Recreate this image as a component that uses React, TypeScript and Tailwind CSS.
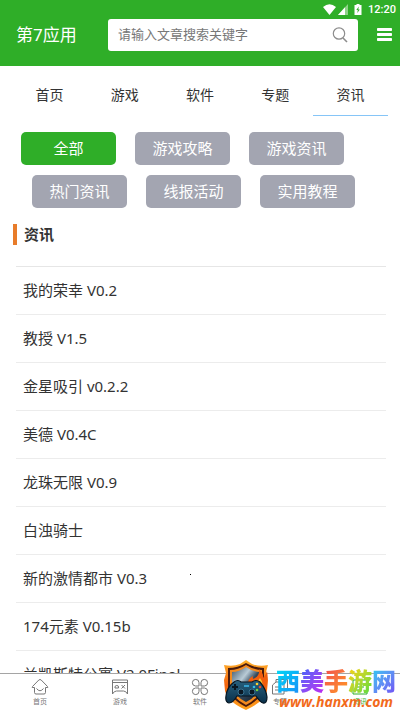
import { useState } from "react";

const tabs = ["首页", "游戏", "软件", "专题", "资讯"];

const categoryRows = [
  ["全部", "游戏攻略", "游戏资讯"],
  ["热门资讯", "线报活动", "实用教程"],
];

const articles = [
  "我的荣幸 V0.2",
  "教授 V1.5",
  "金星吸引 v0.2.2",
  "美德 V0.4C",
  "龙珠无限 V0.9",
  "白浊骑士",
  "新的激情都市 V0.3",
  "174元素 V0.15b",
  "兰凯斯特公寓 V2.0Final",
];

function StatusBar() {
  return (
    <div className="flex h-[19px] items-center justify-end pr-1 text-white">
      <svg className="h-[11px] w-[13px]" viewBox="0 0 13 11" fill="currentColor">
        <path d="M0 3Q6.500-2.500 13 3L6.500 11Z" />
      </svg>
      <svg className="ml-0.5 h-[11px] w-[10px]" viewBox="0 0 10 11">
        <path d="M0 11L10 0V11Z" fill="#8fd389" />
        <path d="M0 11L7 3.300V11Z" fill="#fff" />
      </svg>
      <svg className="ml-1.5 h-[11px] w-[8px]" viewBox="0 0 8 11">
        <path d="M2.500 0h3v1H7.500v10H.5V1h2z" fill="#fff" />
        <path d="M4.800 2.500L2.300 6h1.500L3.300 9l2.500-3.600H4.300z" fill="#2fae28" />
      </svg>
      <span className="ml-1.5 font-['Roboto'] text-[11px] font-medium leading-4">
        12:20
      </span>
    </div>
  );
}

function Header() {
  return (
    <header className="h-[66px] shrink-0 bg-[#2fae28]">
      <StatusBar />
      <div className="flex h-8 items-center pl-4 pr-2">
        <h1 className="w-[92px] shrink-0 text-[17px] leading-6 text-white">
          第7应用
        </h1>
        <form
          className="flex h-8 min-w-0 flex-1 items-center rounded-[3px] bg-white px-2.5"
          onSubmit={(e) => e.preventDefault()}
        >
          <input
            aria-label="搜索"
            className="min-w-0 flex-1 bg-transparent text-[13px] text-gray-700 outline-none placeholder:text-[#777]"
            placeholder="请输入文章搜索关键字"
            type="search"
          />
          <button aria-label="搜索" type="submit">
            <svg
              className="h-4 w-4"
              viewBox="0 0 16 16"
              fill="none"
              stroke="#8c8c8c"
              strokeWidth="1.200"
            >
              <circle cx="7" cy="6.500" r="5.700" />
              <path d="M11 11L15 15" strokeWidth="1.600" />
            </svg>
          </button>
        </form>
        <button aria-label="菜单" className="ml-[19px]" type="button">
          <svg className="h-[14px] w-[15px]" viewBox="0 0 15 14" fill="#fff">
            <rect width="15" height="3" rx=".7" />
            <rect y="5" width="15" height="3" rx=".7" />
            <rect y="10" width="15" height="3" rx=".7" />
          </svg>
        </button>
      </div>
    </header>
  );
}

function HomeIcon() {
  return (
    <path d="M3.500 9.500H1.200Q1 9 1.500 8.500L7.800 2Q9 1 10.200 2L16.500 8.500Q17 9 16.800 9.500H14.500V14.500Q14.500 16 13 16H5Q3.500 16 3.500 14.500ZM5.500 10.500Q9 15 12.500 10.500" />
  );
}

function GameIcon() {
  return (
    <>
      <path d="M1.500 2H16.500V16Q15 13 12.500 13H5.500Q3 13 1.500 16ZM1.500 4.500H16.500" />
      <path d="M4 10V9Q4 7.500 5.800 7.500T7.500 9V10Z" />
      <path d="M10.500 7L14 10.500M14 7L10.500 10.500" />
    </>
  );
}

function AppIcon() {
  return (
    <>
      <path d="M8 8H4.500A3.300 3.300 0 1 1 8 4.700Z" />
      <path d="M10 8V4.700A3.300 3.300 0 1 1 13.500 8Z" />
      <path d="M8 10V13.300A3.300 3.300 0 1 1 4.500 10Z" />
      <path d="M10 10H13.500A3.300 3.300 0 1 1 10 13.300Z" />
    </>
  );
}

function TopicIcon() {
  return (
    <>
      <path d="M5 4V1.500H16.500V13H13" />
      <path d="M1.500 7L5 4H13V16H1.500ZM4 9H10M4 12H10" />
    </>
  );
}

function NewsIcon() {
  return <path d="M2 2H16V16H2ZM5 6H13M5 9H13M5 12H10" />;
}

const bottomItems = [
  { label: "首页", Icon: HomeIcon },
  { label: "游戏", Icon: GameIcon },
  { label: "软件", Icon: AppIcon },
  { label: "专题", Icon: TopicIcon },
  { label: "资讯", Icon: NewsIcon },
];

function BottomBar() {
  return (
    <nav className="grid h-[38px] shrink-0 grid-cols-5 border-t border-[#a5a5a5] bg-white">
      {bottomItems.map(({ label, Icon }, i) => (
        <a
          className={`flex flex-col items-center pt-1 ${i === 4 ? "text-[#2fae28]" : "text-[#777]"}`}
          href="#"
          key={label}
        >
          <svg
            className="h-[18px] w-[18px]"
            viewBox="0 0 18 18"
            fill="none"
            stroke="currentColor"
            strokeWidth="1"
          >
            <Icon />
          </svg>
          <span className="mt-px text-[7px] leading-[10px]">{label}</span>
        </a>
      ))}
    </nav>
  );
}

function ShieldLogo() {
  return (
    <svg className="h-[52px] w-[48px] shrink-0" viewBox="0 0 48 52">
      <defs>
        <linearGradient id="flame" x1="0" y1="0" x2="0" y2="1">
          <stop offset="0" stopColor="#ffb32c" />
          <stop offset=".5" stopColor="#f4640f" />
          <stop offset="1" stopColor="#ffa21c" />
        </linearGradient>
        <linearGradient id="steel" x1="0" y1="0" x2="1" y2="1">
          <stop offset="0" stopColor="#3c5468" />
          <stop offset=".35" stopColor="#b9cbd6" />
          <stop offset=".55" stopColor="#34495c" />
          <stop offset="1" stopColor="#0d1823" />
        </linearGradient>
        <linearGradient id="pad" x1="0" y1="0" x2="0" y2="1">
          <stop offset="0" stopColor="#28617f" />
          <stop offset="1" stopColor="#0a304a" />
        </linearGradient>
      </defs>
      <path
        d="M24 1L30 5Q38 8 46 6L44 13L46 21L45 32Q42 43 24 51Q6 43 3 32L2 21L4 14L2 6Q11 8 18 5Z"
        fill="url(#flame)"
      />
      <path
        d="M24 4Q32 9 42 9V28Q40 40 24 48Q8 40 6 28V9Q16 9 24 4Z"
        fill="#4a1b0c"
      />
      <path
        d="M24 6Q32 11 40 11V27Q38 39 24 46Q10 39 8 27V11Q16 11 24 6Z"
        fill="#f38a1e"
      />
      <path
        d="M24 8Q31 13 38 13V27Q36 37 24 43Q12 37 10 27V13Q17 13 24 8Z"
        fill="url(#steel)"
      />
      <path
        d="M26 27Q25 20 31 17Q30 21 33 19Q38 16 37 10Q42 15 41 19Q44 16 45 12Q47 23 43 30Z"
        fill="#f15d0d"
      />
      <path d="M30 27Q31 23 35 22Q35 24 38 19Q42 24 40 29Z" fill="#ffc532" />
      <path
        d="M12 23Q16 20 19 23H30Q34 20 38 23Q44 30 45 38Q45 45 41 44Q38 43 34 37H15Q11 44 7 44Q3 43 4 37Q5 28 12 23Z"
        fill="url(#pad)"
        stroke="#071521"
        strokeWidth="1.200"
      />
      <path d="M13 25v6M10 28h6" stroke="#091722" strokeWidth="2" />
      <circle cx="19" cy="33" r="3" fill="#0a1925" stroke="#397392" />
      <circle cx="30" cy="33" r="3" fill="#0a1925" stroke="#397392" />
      <path d="M22 27h5" stroke="#3cb9eb" strokeWidth="1.500" />
      <circle cx="35" cy="25" r="1.300" fill="#ffd02e" />
      <circle cx="38" cy="28" r="1.300" fill="#ed4930" />
      <circle cx="32" cy="28" r="1.300" fill="#36bde5" />
      <circle cx="35" cy="31" r="1.300" fill="#73cf3d" />
    </svg>
  );
}

const brandChars = [
  { char: "西", color: "from-[#08dcf2] to-[#1c8cf8]" },
  { char: "美", color: "from-[#2a62fa] to-[#c01cf0]" },
  { char: "手", color: "from-[#f0484c] to-[#ff9a12]" },
  { char: "游", color: "from-[#fcd010] to-[#3cdc3c]" },
  { char: "网", color: "from-[#0ccef0] to-[#7048f4]" },
];

function SiteBrand() {
  return (
    <a className="absolute right-1 bottom-0 flex items-center" href="#">
      <ShieldLogo />
      <span className="ml-1.5 flex flex-col pt-2">
        <span className="flex h-[27px] justify-center text-[24px] font-black leading-[27px]">
          {brandChars.map(({ char, color }) => (
            <span
              className={`bg-gradient-to-br bg-clip-text text-transparent ${color}`}
              key={char}
            >
              {char}
            </span>
          ))}
        </span>
        <span className="h-[17px] text-center font-['Open_Sans'] text-[14px] font-bold italic leading-4 text-[#f26a1b]">
          www.hanxm.com
        </span>
      </span>
    </a>
  );
}

export default function App() {
  const [category, setCategory] = useState("全部");

  return (
    <div className="relative flex h-screen flex-col overflow-hidden bg-white font-['Noto_Sans','Noto_Sans_CJK_SC',sans-serif] text-[#333]">
      <Header />
      <nav className="grid h-[50px] shrink-0 grid-cols-5 px-3">
        {tabs.map((tab) => (
          <a
            className={`flex items-center justify-center border-b pt-2 text-[14px] ${tab === "资讯" ? "border-b-[#86c5f7]" : "border-b-white"}`}
            href="#"
            key={tab}
          >
            {tab}
          </a>
        ))}
      </nav>

      <main className="min-h-0 flex-1 overflow-hidden">
        <div className="flex flex-col gap-2.5 pt-4">
          {categoryRows.map((row, i) => (
            <div
              className={`flex gap-[19px] ${i === 0 ? "pl-[21px] pr-14" : "pl-8 pr-[45px]"}`}
              key={row[0]}
            >
              {row.map((name) => (
                <button
                  className={`h-[33px] flex-1 rounded-[5px] text-[15px] text-white ${category === name ? "bg-[#2fae28]" : "bg-[#a3a5b1]"}`}
                  key={name}
                  onClick={() => setCategory(name)}
                  type="button"
                >
                  {name}
                </button>
              ))}
            </div>
          ))}
        </div>

        <div className="mt-4 flex items-center gap-[7px] pl-[13px]">
          <span className="h-[21px] w-1 bg-[#e87c2a]" />
          <h2 className="text-[15px] font-bold leading-[21px]">资讯</h2>
        </div>

        <ul className="ml-4 mr-3.5 mt-[21px] border-t border-[#e6e6e6]">
          {articles.map((title) => (
            <li
              className="relative h-12 border-b border-[#ececec]"
              key={title}
            >
              <a className="block pl-[7px] text-[15px] leading-[47px]" href="#">
                {title}
              </a>
              {title.startsWith("新的") && (
                <span className="absolute top-[19px] left-[174px] h-px w-px bg-black" />
              )}
            </li>
          ))}
        </ul>
      </main>

      <BottomBar />
      <SiteBrand />
    </div>
  );
}
